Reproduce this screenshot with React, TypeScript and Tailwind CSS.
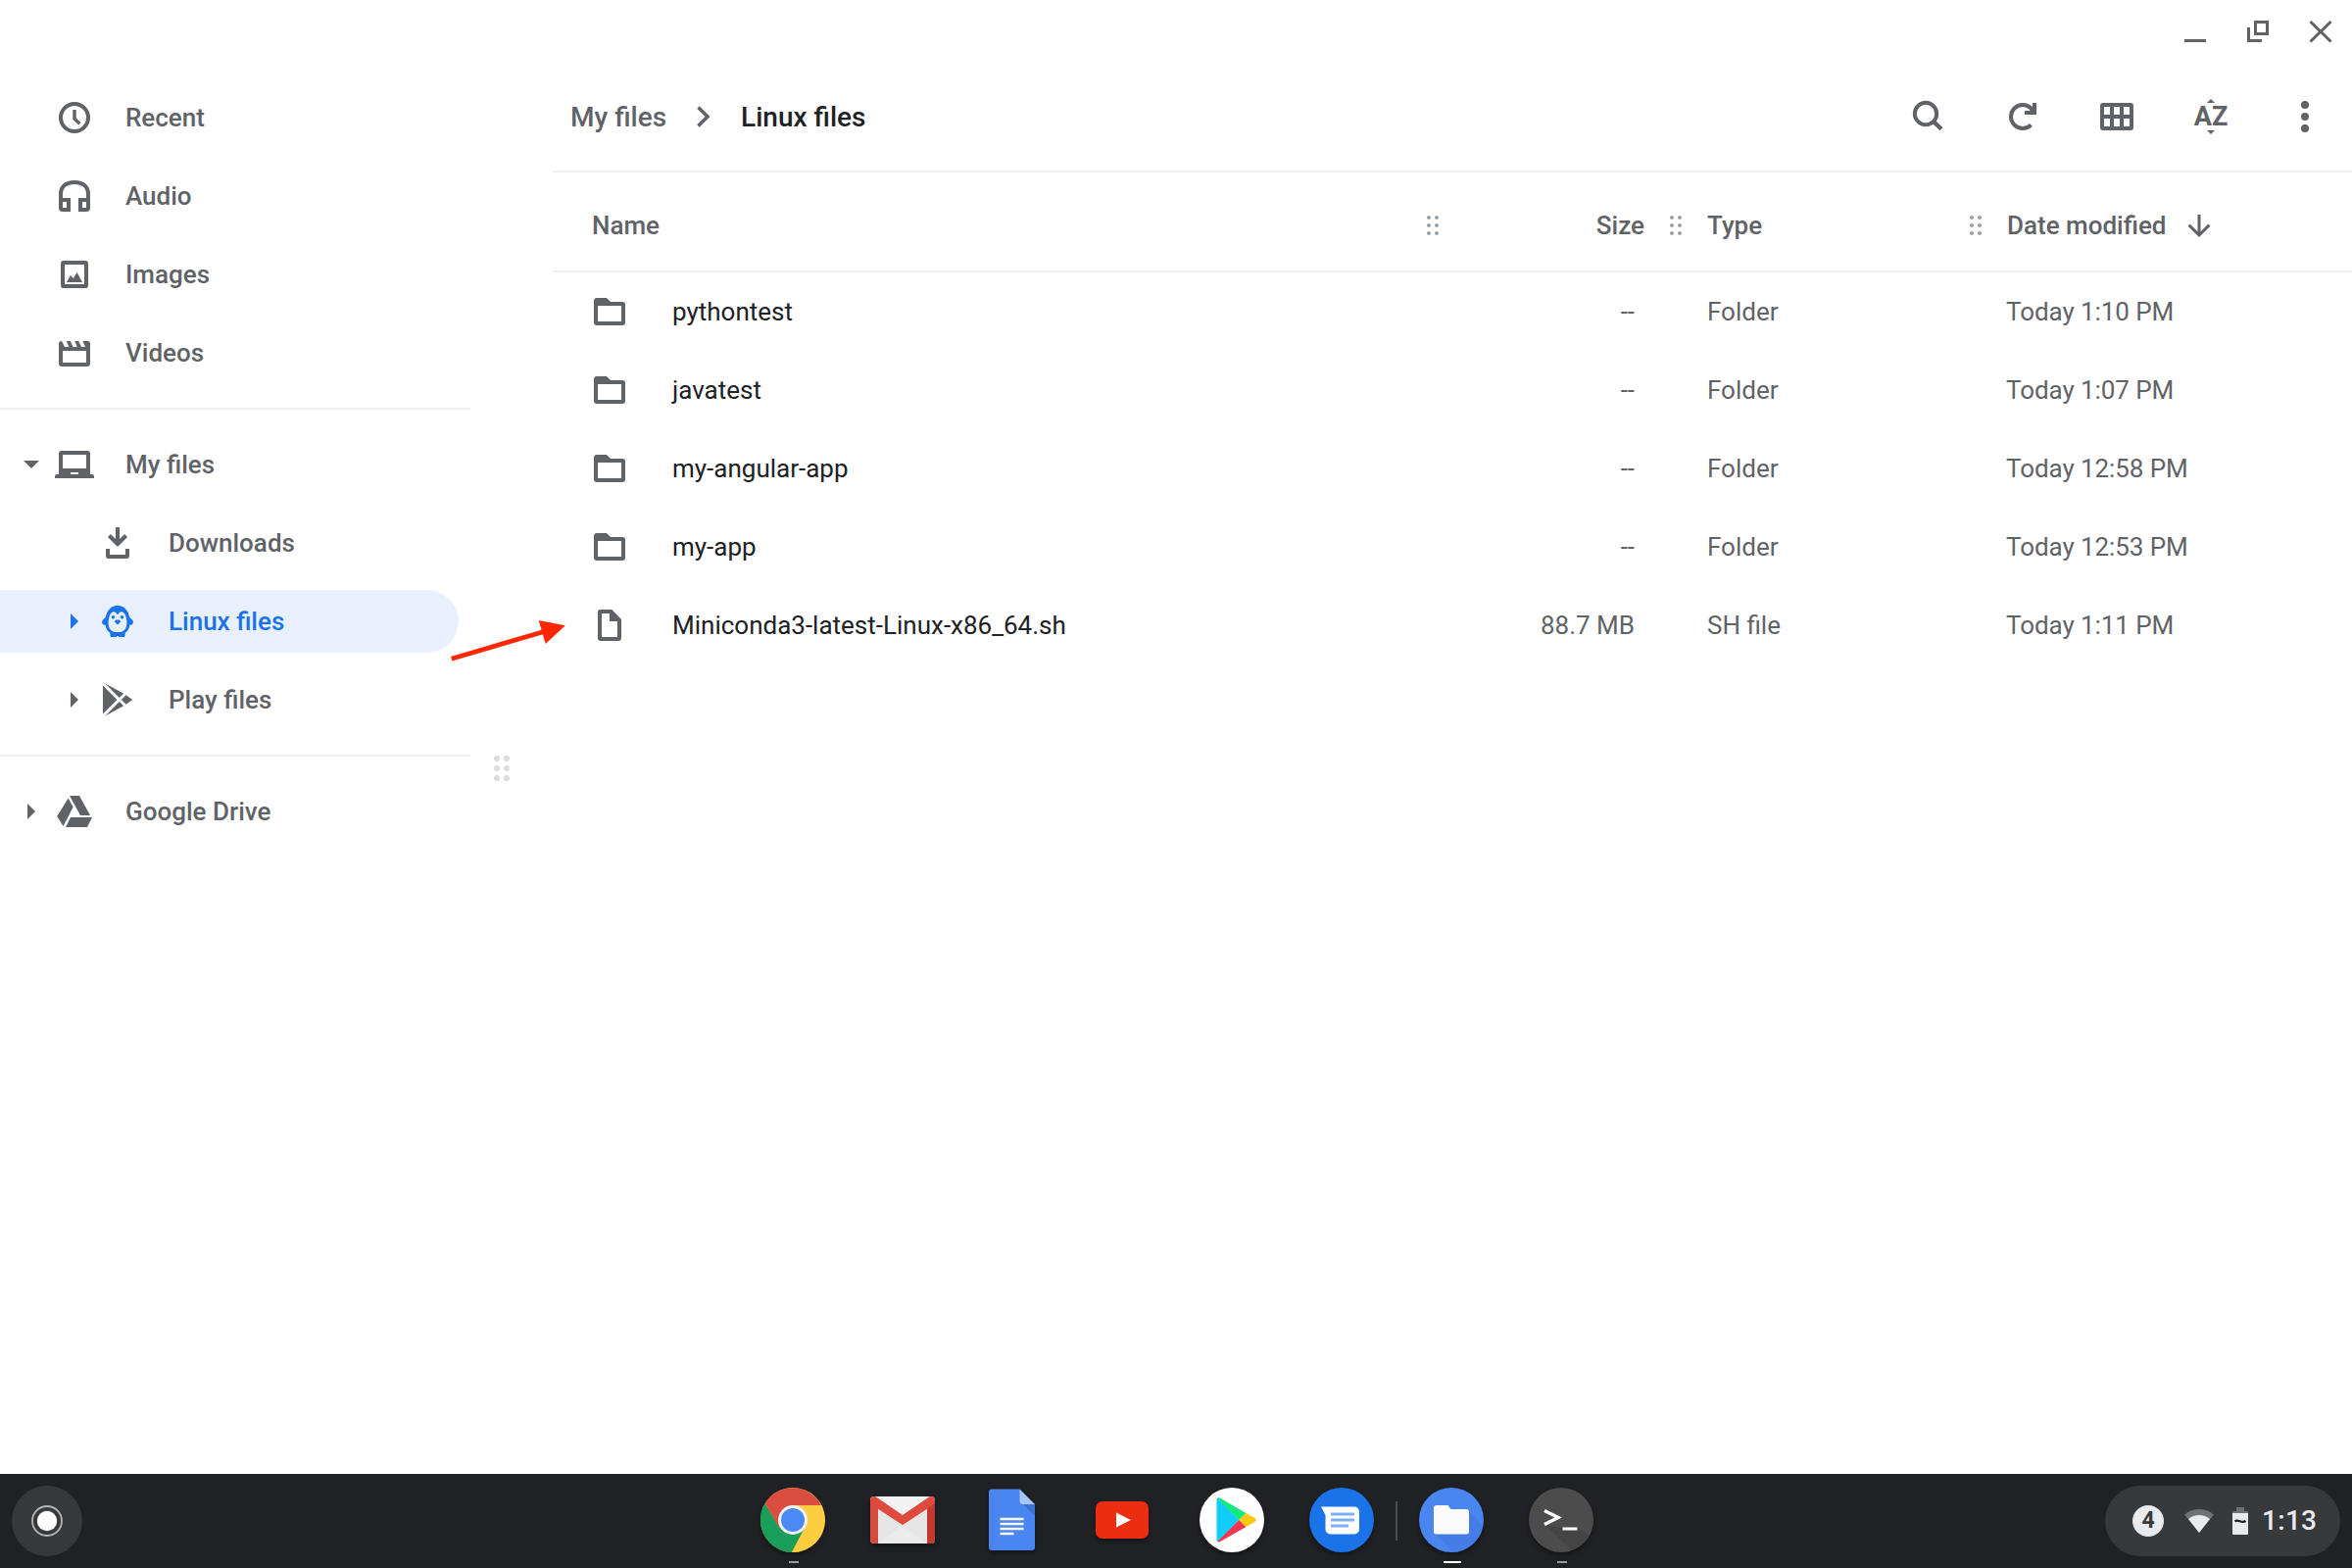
import React from "react";

type P = { children?: React.ReactNode };

function Icon({ children, className = "" }: P & { className?: string }) {
  return (
    <svg viewBox="0 0 20 20" className={`size-10 shrink-0 ${className}`} fill="currentColor">
      {children}
    </svg>
  );
}

const icons: Record<string, React.ReactNode> = {
  recent: (
    <>
      <circle cx="10" cy="10" r="7" fill="none" stroke="currentColor" strokeWidth="2" />
      <path d="M10 6v4.6l2.7 2.5" fill="none" stroke="currentColor" strokeWidth="1.7" />
    </>
  ),
  audio: (
    <path
      fillRule="evenodd"
      d="M10 2c-5 0-8 2.6-8 7v7a2 2 0 0 0 2 2h4v-7H4V9c0-3.2 2.2-5 6-5s6 1.800 6 5v2h-4v7h4a2 2 0 0 0 2-2V9c0-4.400-3-7-8-7zM4 13h2v3H4zM14 13h2v3h-2z"
    />
  ),
  images: (
    <>
      <rect x="4" y="4" width="12" height="12" rx=".4" fill="none" stroke="currentColor" strokeWidth="2" />
      <path d="M6 14l2-3.500 1.400 1.500L11.300 9 14 14z" />
    </>
  ),
  videos: (
    <path
      fillRule="evenodd"
      d="M3.500 4 5 7h2.200L5.900 4h2l1.400 3h2.100l-1.300-3h2l1.400 3h2L14.200 4h2.300A1.500 1.500 0 0 1 18 5.500v10a1.500 1.500 0 0 1-1.500 1.500h-13A1.500 1.500 0 0 1 2 15.500v-10A1.500 1.500 0 0 1 3.500 4zM4 9v6h12V9z"
    />
  ),
  computer: (
    <path
      fillRule="evenodd"
      d="M3.500 3h13a1.500 1.500 0 0 1 1.500 1.500V15h1a1 1 0 0 1 1 1v1H0v-1a1 1 0 0 1 1-1h1V4.500A1.500 1.500 0 0 1 3.500 3zM4 5v7h12V5zM8 14v1h4v-1z"
    />
  ),
  downloads: (
    <>
      <path d="M9 2h2v6l2.600-2.500L15 7l-5 5-5-5 1.400-1.500L9 8z" />
      <path d="M4 13h2v3h8v-3h2v3.500a1.500 1.500 0 0 1-1.500 1.500h-9A1.500 1.500 0 0 1 4 16.500z" />
    </>
  ),
  linux: (
    <>
      <path
        fillRule="evenodd"
        d="M10 2C6.300 2 3.700 5 3.700 10.500C3.700 14.500 6 17 10 17s6.300-2.500 6.300-6.500C16.300 5 13.700 2 10 2zM10 6.700 9.300 5.800C8.600 4.900 7.600 4.800 6.800 5.700C5.800 6.800 5.300 8.500 5.300 10.700c0 3.100 1.500 4.900 4.700 4.900s4.700-1.800 4.700-4.900c0-2.200-.5-3.900-1.500-5c-.8-.9-1.800-.8-2.500.1z"
      />
      <path d="M4.200 7.600 2.300 9.500C1.800 10.300 2 11.300 2.700 11.700L4.500 12zM15.800 7.600 17.700 9.500c.5.800.3 1.800-.4 2.200L15.500 12z" />
      <path d="M6.200 15.500h7.600v1.700a.8.8 0 0 1-.8.8h-2.200L10 17.400 9.200 18H7a.8.8 0 0 1-.8-.8z" />
      <circle cx="7.700" cy="7.900" r=".85" />
      <circle cx="12.300" cy="7.900" r=".85" />
      <path d="M9.100 9.200h1.800l.7.900L10 11.700 8.400 10.100z" />
    </>
  ),
  play: (
    <>
      <path d="M2.500 2.800 9.700 10l-7.200 7.200z" />
      <path d="M3.700 1.800 13.100 6.900 10.900 9z" />
      <path d="M3.700 18.200 13.100 13.100 10.900 11z" />
      <path d="M14.300 7.600 17.600 10l-3.300 2.400L11.900 10z" />
    </>
  ),
  drive: (
    <>
      <path d="M7.500 2h5l5.500 10h-5z" />
      <path d="M6.800 3.300 9.300 7.800 4.300 17.500 1.100 12.500z" />
      <path d="M8 13h11l-2.500 5h-11z" />
    </>
  ),
  folder: (
    <path
      fillRule="evenodd"
      d="M3.500 3h5l2 2h6A1.500 1.500 0 0 1 18 6.500v9a1.500 1.500 0 0 1-1.500 1.500h-13A1.500 1.500 0 0 1 2 15.500v-11A1.500 1.500 0 0 1 3.500 3zM4 7v8h12V7z"
    />
  ),
  file: (
    <path
      fillRule="evenodd"
      d="M5.200 2h6L16 7v9.800A1.200 1.200 0 0 1 14.800 18H5.200A1.200 1.200 0 0 1 4 16.800V3.200A1.200 1.200 0 0 1 5.200 2zM6 4v12h8V8h-4V4z"
    />
  ),
};

function Grip({ big = false }: { big?: boolean }) {
  return (
    <div className={big ? "grid grid-cols-2 gap-1 text-[#dadce0]" : "grid grid-cols-2 gap-1 text-[#9aa0a6]"}>
      {[0, 1, 2, 3, 4, 5].map((i) => (
        <span key={i} className={big ? "size-1.5 rounded-full bg-current" : "size-1 rounded-full bg-current"} />
      ))}
    </div>
  );
}

function NavItem({
  icon,
  label,
  arrow,
  nested,
  active,
}: {
  icon: string;
  label: string;
  arrow?: "down" | "right";
  nested?: boolean;
  active?: boolean;
}) {
  return (
    <div
      className={`my-2 flex h-16 w-[468px] items-center rounded-r-full ${nested ? "pl-[60px]" : "pl-4"} ${
        active ? "bg-[#e8f0fe] text-[#1a73e8]" : "text-[#5f6368]"
      }`}
    >
      <svg viewBox="0 0 32 32" className="mr-2 size-8 shrink-0" fill="currentColor">
        {arrow === "down" && <path d="M8 12h16l-8 8z" />}
        {arrow === "right" && <path d="M12 8v16l8-8z" />}
      </svg>
      <Icon>{icons[icon]}</Icon>
      <span className="ml-8">{label}</span>
    </div>
  );
}

const files = [
  ["folder", "pythontest", "--", "Folder", "Today 1:10 PM"],
  ["folder", "javatest", "--", "Folder", "Today 1:07 PM"],
  ["folder", "my-angular-app", "--", "Folder", "Today 12:58 PM"],
  ["folder", "my-app", "--", "Folder", "Today 12:53 PM"],
  ["file", "Miniconda3-latest-Linux-x86_64.sh", "88.7 MB", "SH file", "Today 1:11 PM"],
];

function AppSlot({ children, mark }: P & { mark?: "idle" | "active" }) {
  return (
    <div className="flex w-28 flex-col items-center pt-[13px]">
      <svg viewBox="0 0 68 68" className="size-[68px] overflow-visible drop-shadow-[0_3px_2px_rgba(0,0,0,0.35)]">
        {children}
      </svg>
      {mark && (
        <span
          className={
            mark === "active" ? "ml-0.5 mt-2 h-0.5 w-[18px] bg-white" : "ml-0.5 mt-2 h-0.5 w-2.5 bg-[#9a9b9d]"
          }
        />
      )}
    </div>
  );
}

export default function App() {
  return (
    <div className="relative flex h-[1600px] w-[2400px] flex-col overflow-hidden bg-white font-['Roboto',sans-serif] text-[26px] leading-8 text-[#5f6368]">
      <div className="flex min-h-0 flex-1">
        <aside className="flex w-[480px] flex-col pt-20 font-medium">
          <NavItem icon="recent" label="Recent" />
          <NavItem icon="audio" label="Audio" />
          <NavItem icon="images" label="Images" />
          <NavItem icon="videos" label="Videos" />
          <div className="my-4 h-0.5 shrink-0 bg-[#efeff0]" />
          <NavItem icon="computer" label="My files" arrow="down" />
          <NavItem icon="downloads" label="Downloads" nested />
          <NavItem icon="linux" label="Linux files" nested active arrow="right" />
          <NavItem icon="play" label="Play files" nested arrow="right" />
          <div className="my-4 h-0.5 shrink-0 bg-[#efeff0]" />
          <NavItem icon="drive" label="Google Drive" arrow="right" />
        </aside>
        <div className="mr-5 flex w-16 items-center justify-center pt-16">
          <Grip big />
        </div>
        <main className="flex-1">
          <div className="flex h-16 items-center justify-end">
            <div className="flex w-48 text-[#5f6368]">
              <svg viewBox="0 0 64 64" className="size-16">
                <path d="M21 41.500h22" stroke="currentColor" strokeWidth="3" />
              </svg>
              <svg viewBox="0 0 64 64" className="size-16" fill="none" stroke="currentColor" strokeWidth="3">
                <path d="M29.500 22.500h12v12h-12zM22.500 28v13.500H36" />
              </svg>
              <svg viewBox="0 0 64 64" className="size-16">
                <path d="M21.500 22l21 20.500M42.500 22l-21 20.500" stroke="currentColor" strokeWidth="3" />
              </svg>
            </div>
          </div>
          <div className="flex h-28 items-center border-b-2 border-[#efeff0] pl-[18px] text-[28px] font-medium">
            <span className="pt-0.5">My files</span>
            <svg viewBox="0 0 40 40" className="mx-[18px] size-10">
              <path d="M14.500 10.500 24 20l-9.500 9.500" fill="none" stroke="currentColor" strokeWidth="3.600" />
            </svg>
            <span className="pt-0.5 text-[#202124]">Linux files</span>
            <div className="ml-auto mr-7 flex gap-14 text-[#5f6368]">
              <Icon>
                <circle cx="8.500" cy="8.500" r="5.600" fill="none" stroke="currentColor" strokeWidth="2" />
                <path d="M12.300 12.300 16.500 16.400" stroke="currentColor" strokeWidth="2.200" />
              </Icon>
              <Icon>
                <path
                  d="M14.240 14.240A6 6 0 1 1 14.240 5.760L15.500 7"
                  fill="none"
                  stroke="currentColor"
                  strokeWidth="2"
                />
                <path d="M17 3v6h-6V7h2.500l1.500-1.500V3z" />
              </Icon>
              <Icon>
                <path
                  fillRule="evenodd"
                  d="M3 3h14a1.500 1.500 0 0 1 1.500 1.500v11A1.500 1.500 0 0 1 17 17H3a1.500 1.500 0 0 1-1.500-1.500v-11A1.500 1.500 0 0 1 3 3zM3.500 5v4h3V5zM8.500 5v4h3V5zM13.500 5v4h3V5zM3.500 11v4h3v-4zM8.500 11v4h3v-4zM13.500 11v4h3v-4z"
                />
              </Icon>
              <div className="flex size-10 flex-col items-center justify-center">
                <svg viewBox="0 0 8 4" className="h-1 w-2 shrink-0">
                  <path d="M0 4 4 0l4 4z" fill="currentColor" />
                </svg>
                <span className="my-px flex h-[26px] items-center text-[27px] font-bold leading-none">AZ</span>
                <svg viewBox="0 0 8 4" className="h-1 w-2 shrink-0">
                  <path d="M0 0 4 4l4-4z" fill="currentColor" />
                </svg>
              </div>
              <Icon>
                <circle cx="10" cy="4" r="2" />
                <circle cx="10" cy="10" r="2" />
                <circle cx="10" cy="16" r="2" />
              </Icon>
            </div>
          </div>
          <div className="flex h-[102px] items-center border-b-2 border-[#efeff0] pb-2 pt-4 font-medium">
            <span className="w-[892px] pl-10">Name</span>
            <Grip />
            <span className="w-[210px] text-right">Size</span>
            <div className="ml-[26px] w-[38px]">
              <div className="w-3">
                <Grip />
              </div>
            </div>
            <span className="w-[268px]">Type</span>
            <Grip />
            <span className="ml-[26px]">Date modified</span>
            <Icon className="ml-[13px]">
              <path
                d="M10 4.500v10.300M4.800 9.800 10 15l5.200-5.200"
                fill="none"
                stroke="currentColor"
                strokeWidth="1.500"
              />
            </Icon>
          </div>
          {files.map(([icon, name, size, type, date]) => (
            <div key={name} className="flex h-20 items-center">
              <Icon className="ml-[38px]">{icons[icon]}</Icon>
              <span className="ml-11 w-[782px] text-[#202124]">{name}</span>
              <span className="w-[200px] text-right">{size}</span>
              <span className="ml-[74px] w-[305px]">{type}</span>
              <span className="tracking-[-0.08px]">{date}</span>
            </div>
          ))}
        </main>
      </div>

      <svg viewBox="0 0 126 46" className="absolute left-[456px] top-[630px] h-[46px] w-[126px]">
        <path d="M4.700 42.300 100 14.200" stroke="#ff2600" strokeWidth="4.800" />
        <path d="M93.700 3 120.800 8.200 100.700 27z" fill="#ff2600" />
      </svg>

      <footer className="flex h-24 bg-[#202124]">
        <div className="flex w-[753px] pl-3 pt-3">
          <svg viewBox="0 0 72 72" className="size-[72px]">
            <circle cx="36" cy="36" r="36" fill="#38393b" />
            <circle cx="36" cy="36" r="15" fill="none" stroke="#b4b5b6" strokeWidth="1.800" />
            <circle cx="36" cy="36" r="10.200" fill="#fff" />
          </svg>
        </div>
        <AppSlot mark="idle">
          <circle cx="34" cy="34" r="33" fill="#fbc93b" />
          <path d="M5.800 16.700A33 33 0 0 0 33 67L45.500 43 34 34 20.500 42z" fill="#1a9f5a" />
          <path d="M34 19h29A33 33 0 0 1 33 67l14-26z" fill="#ffcd40" />
          <path d="M5.800 16.700 20 42 34 34V19h29A33 33 0 0 0 5.800 16.700z" fill="#db4d41" />
          <circle cx="34" cy="34" r="15" fill="#f4f4f4" />
          <circle cx="34" cy="34" r="12" fill="#4a8af4" />
        </AppSlot>
        <AppSlot>
          <rect x="1" y="10" width="66" height="48" rx="4" fill="#eaeaea" />
          <path d="M1 14v40a4 4 0 0 0 4 4h4V22l25 17 25-17v36h4a4 4 0 0 0 4-4V14z" fill="#d54b3d" />
          <path d="M9 24v34L34 40l25 18V24L34 39z" fill="#e6e6e6" />
          <path d="M9 58 34 40l25 18z" fill="#ececec" />
          <path d="M59 22v36h4a4 4 0 0 0 4-4V16z" fill="#c23a2e" />
          <path d="M5 10 34 30 63 10z" fill="#f2f2f2" />
          <path
            d="M1 14a4 4 0 0 1 6-3.500L34 29l27-18.500a4 4 0 0 1 6 3.500c0 2-1 4-3 5.500L34 39 4 19.500C2 18 1 16 1 14z"
            fill="#de4b3e"
          />
        </AppSlot>
        <AppSlot>
          <path d="M13 2.500h28l16 16V62a3 3 0 0 1-3 3H13a3 3 0 0 1-3-3V5.500a3 3 0 0 1 3-3z" fill="#4a86ef" />
          <path d="M45 18h12v12z" fill="#3b73d4" />
          <path d="M41.500 2.500v12a3.500 3.500 0 0 0 3.500 3.500h12z" fill="#a5c4fa" />
          <path d="M21.500 33h24M21.500 38h24M21.500 43h24M21.500 48h14" stroke="#f4f7fd" strokeWidth="2.400" />
        </AppSlot>
        <AppSlot>
          <rect x="7" y="15" width="54" height="38" rx="7" fill="#eb2d12" />
          <path d="M28 26.500v15L43 34z" fill="#fff" />
        </AppSlot>
        <AppSlot>
          <circle cx="34" cy="34" r="33" fill="#fff" />
          <path d="M18.500 13v42a2 2 0 0 0 1 1.300L41.300 34 20 11.500a2 2 0 0 0-1.500 1.500z" fill="#10cdfb" />
          <path d="M20 11.300c.8-.3 1.500 0 2.200.4L48.500 27 41.300 34 19.200 11.800z" fill="#14ea7c" />
          <path d="M19.200 56c.8.600 2 .6 3 0L48.500 41 41.300 34z" fill="#f2364f" />
          <path d="M48.500 27l9 5c1.500 1 1.500 3 0 4l-9 5-7.200-7z" fill="#fdc90d" />
        </AppSlot>
        <AppSlot>
          <circle cx="34" cy="34" r="33" fill="#1a73e8" />
          <path d="M13 20.500h34a5 5 0 0 1 5 5V43.500a5 5 0 0 1-5 5H22.500a5 5 0 0 1-5-5V29z" fill="#fff" />
          <path d="M23 28h24M23 34h24M23 40h18" stroke="#82aef7" strokeWidth="2.800" />
        </AppSlot>
        <div className="-mx-px mt-7 h-10 w-0.5 bg-[#4b4c4f]" />
        <AppSlot mark="active">
          <circle cx="34" cy="34" r="33" fill="#4a86f0" />
          <path d="M17 47 35 67A33 33 0 0 0 66 40L52 24z" fill="#437de5" />
          <path
            d="M18.500 19h12l3 4h16a2.500 2.500 0 0 1 2.500 2.500V46a2.500 2.500 0 0 1-2.500 2.500h-31A2.500 2.500 0 0 1 16 46V21.500A2.500 2.500 0 0 1 18.500 19z"
            fill="#fafafa"
          />
        </AppSlot>
        <AppSlot mark="idle">
          <circle cx="34" cy="34" r="33" fill="#4c4c4c" />
          <path d="M18 39 44 65A33 33 0 0 0 63 50L51 42l-8 1z" fill="#444" />
          <path d="M17 24.500 31 31.500 17 38.500" fill="none" stroke="#fff" strokeWidth="3.500" />
          <path d="M35.500 43h15" stroke="#fff" strokeWidth="3" />
        </AppSlot>
        <div className="ml-auto mr-3 mt-3 flex h-[72px] w-[240px] items-center rounded-full bg-[#38393b] pl-7 text-[#e8eaed]">
          <span className="flex size-8 items-center justify-center rounded-full bg-[#e8eaed] text-[23px] font-bold text-[#38393b]">
            4
          </span>
          <svg viewBox="0 0 32 26" className="ml-5 h-[26px] w-8">
            <path d="M1 6.500a23 23 0 0 1 30 0L16 25z" fill="#707173" />
            <path d="M5 11a17.500 17.500 0 0 1 22 0L16 25z" fill="#e8eaed" />
          </svg>
          <svg viewBox="0 0 16 28" className="ml-[18px] h-7 w-4">
            <path d="M4 0h8v4h3a1 1 0 0 1 1 1v2H0V5a1 1 0 0 1 1-1h3z" fill="#707173" />
            <path d="M0 6h16v21a1 1 0 0 1-1 1H1a1 1 0 0 1-1-1z" fill="#e8eaed" />
            <path d="M2.500 14.500c3-3 7 2.500 11-.5" fill="none" stroke="#202124" strokeWidth="2.200" />
          </svg>
          <span className="ml-3.5 text-[28px] font-medium tracking-[0.300px]">1:13</span>
        </div>
      </footer>
    </div>
  );
}
